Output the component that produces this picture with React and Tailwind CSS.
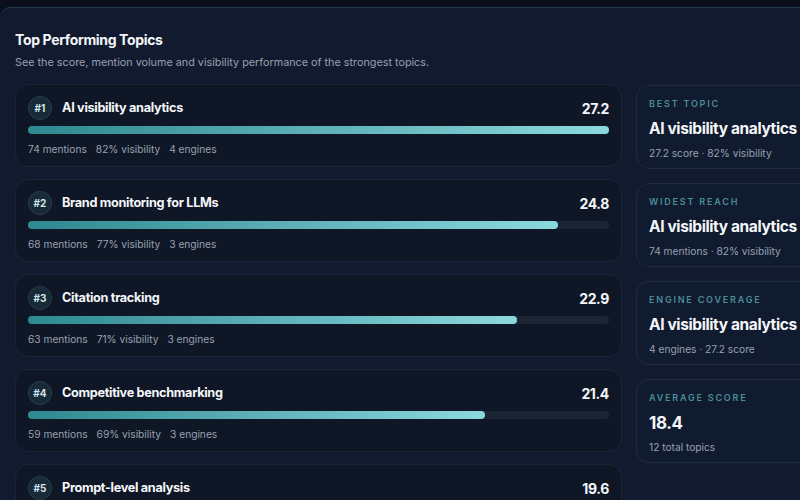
import React from 'react';

const topics = [
    { rank: 1, name: 'AI visibility analytics', score: 27.2, mentions: 74, visibility: 82, engines: 4 },
    { rank: 2, name: 'Brand monitoring for LLMs', score: 24.8, mentions: 68, visibility: 77, engines: 3 },
    { rank: 3, name: 'Citation tracking', score: 22.9, mentions: 63, visibility: 71, engines: 3 },
    { rank: 4, name: 'Competitive benchmarking', score: 21.4, mentions: 59, visibility: 69, engines: 3 },
    { rank: 5, name: 'Prompt-level analysis', score: 19.6, mentions: 55, visibility: 64, engines: 3 },
];

const highlights = [
    { label: 'Best Topic', title: 'AI visibility analytics', sub: '27.2 score · 82% visibility' },
    { label: 'Widest Reach', title: 'AI visibility analytics', sub: '74 mentions · 82% visibility' },
    { label: 'Engine Coverage', title: 'AI visibility analytics', sub: '4 engines · 27.2 score' },
];

const TopicCard = ({ topic, max }) => (
    <div className="rounded-[13px] border border-[#1c2536] bg-[#0f1727] px-[12px] pt-[11px] pb-[9px]">
        <div className="flex h-[24px] items-center">
            <div className="flex h-[24px] w-[24px] items-center justify-center rounded-full border border-[#2a3e4c] bg-[#182a37] text-[10px] font-bold text-[#cfe6ea]">
                #{topic.rank}
            </div>
            <div className="ml-[10px] text-[12.7px] font-bold tracking-tight text-[#f4f6f9]">{topic.name}</div>
            <div className="ml-auto text-[14px] font-bold tracking-tight text-[#f4f6f9]">{topic.score}</div>
        </div>
        <div className="mt-[6px] h-[8px] w-full rounded-full bg-[#1d2535]">
            <div
                className="h-full rounded-full bg-gradient-to-r from-[#2c8a90] to-[#8ad9df]"
                style={{ width: `${(topic.score / max) * 100}%` }}
            />
        </div>
        <div className="mt-[7px] flex gap-[9px] text-[10.2px] leading-[16px] text-[#97a1b0]">
            <span>{topic.mentions} mentions</span>
            <span>{topic.visibility}% visibility</span>
            <span>{topic.engines} engines</span>
        </div>
    </div>
);

const HighlightCard = ({ label, title, sub, big }) => (
    <div className="rounded-[13px] border border-[#1f2b3e] bg-[#111b2f] px-[12px] pt-[12px] pb-[7px]">
        <div className="text-[9px] font-semibold uppercase leading-[12px] tracking-[0.2em] text-[#4b8d96]">{label}</div>
        <div className={`mt-[9px] whitespace-nowrap font-bold leading-[20px] tracking-tight text-[#f4f6f9] ${big ? 'text-[17px]' : 'text-[15.5px]'}`}>{title}</div>
        <div className="mt-[6px] text-[10.2px] leading-[16px] text-[#97a1b0]">{sub}</div>
    </div>
);

export default function App() {
    const max = Math.max(...topics.map(t => t.score));
    return (
        <div className="h-[500px] w-[800px] overflow-hidden bg-[#0a0f1b] pt-[7px] font-['Inter',sans-serif]">
            <div className="h-[600px] w-[860px] rounded-tl-[10px] border-t border-[#1f3b50] bg-[#111a2e] pl-[15px] pt-[22px]">
                <h2 className="text-[14px] font-bold leading-[20px] tracking-tight text-[#f4f6f9]">Top Performing Topics</h2>
                <p className="mt-[3px] text-[10.8px] leading-[20px] text-[#97a1b0]">
                    See the score, mention volume and visibility performance of the strongest topics.
                </p>
                <div className="mt-[11px] flex gap-[14px]">
                    <div className="flex w-[607px] flex-col gap-[12px]">
                        {topics.map(t => (
                            <TopicCard key={t.rank} topic={t} max={max} />
                        ))}
                    </div>
                    <div className="flex w-[200px] flex-col gap-[14px] pt-[1px]">
                        {highlights.map(h => (
                            <HighlightCard key={h.label} {...h} />
                        ))}
                        <HighlightCard label="Average Score" title="18.4" sub="12 total topics" big />
                    </div>
                </div>
            </div>
        </div>
    );
}
